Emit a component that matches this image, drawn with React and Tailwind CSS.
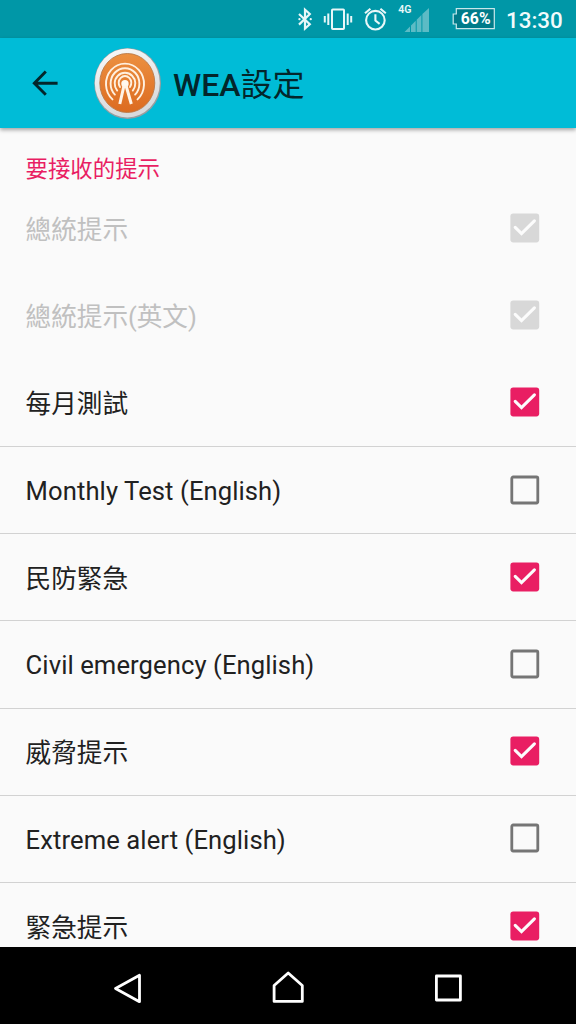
import React from 'react';

const rows = [
  { label: '總統提示', checked: true, disabled: true },
  { label: '總統提示(英文)', checked: true, disabled: true },
  { label: '每月測試', checked: true, divider: true },
  { label: 'Monthly Test (English)', checked: false, divider: true, latin: true },
  { label: '民防緊急', checked: true, divider: true },
  { label: 'Civil emergency (English)', checked: false, divider: true, latin: true },
  { label: '威脅提示', checked: true, divider: true },
  { label: 'Extreme alert (English)', checked: false, divider: true, latin: true },
  { label: '緊急提示', checked: true },
];

function Checkbox({ checked, disabled }) {
  return (
    <svg className="mb-[0.8px] h-[30px] w-[30px] shrink-0" viewBox="0 0 30 30" fill="none">
      {checked ? (
        <>
          <rect x="0.4" y="0.6" width="28.8" height="28.8" rx="2.8" fill={disabled ? '#d8d8d8' : '#e91e63'} />
          <path d="M5.2 14.4 11.5 20.6 24.4 7.9" stroke="#fcfcfc" strokeWidth="3.1" strokeLinecap="round" />
        </>
      ) : (
        <rect x="1.8" y="2" width="26" height="26" rx="1.4" stroke="#757575" strokeWidth="2.8" />
      )}
    </svg>
  );
}

function StatusBar() {
  return (
    <header className="flex h-[38px] shrink-0 items-center bg-[#0097a7] text-white">
      <svg className="ml-[297px] h-[38px] w-[16px] shrink-0" viewBox="0 0 16 38" fill="none" stroke="#e8f7f8" strokeWidth="2.2">
        <path d="M2 14 12.8 24.3 8 28.6V9.7l4.8 4.3L2 24.6" />
        <path d="M2.4 19.2h.1M13.7 19.2h.1" strokeLinecap="round" strokeWidth="2.2" />
      </svg>
      <svg className="ml-[10px] h-[38px] w-[30px] shrink-0" viewBox="0 0 30 38" fill="none" stroke="#e8f7f8" strokeWidth="2">
        <rect x="9" y="9.5" width="12" height="19.5" rx="0.8" />
        <path d="M5.3 13.5v11.5M1.8 16v6.5M24.7 13.5v11.5M28.2 16v6.5" />
      </svg>
      <svg className="ml-[10px] h-[38px] w-[26px] shrink-0" viewBox="0 0 26 38" fill="none" stroke="#e8f7f8" strokeWidth="2.1">
        <circle cx="12.4" cy="20.2" r="9.3" />
        <path d="M12.4 14.3v6.3l4.2 3.2M2 13.2 7.4 8.7M17.4 8.7l5.4 4.5" />
      </svg>
      <svg className="ml-[8px] h-[38px] w-[34px] shrink-0" viewBox="0 0 34 38">
        <text x="1.3" y="12.8" fill="#eaf8f9" fontFamily="Roboto, sans-serif" fontWeight="600" fontSize="10.6">4G</text>
        <path d="M7.5 32 13 26.5V32zM14 25.5l4.7-4.7V32H14zM19.7 19.8l4.7-4.7V32h-4.7zM25.4 14.1 32 8v24h-6.6z" fill="#5cbbc5" />
      </svg>
      <svg className="ml-[21px] h-[38px] w-[45px] shrink-0" viewBox="0 0 45 38">
        <path d="M4.3 8.6h38v20h-38v-4.6H1.2v-10h3.1z" fill="#007b89" stroke="#c8e8eb" strokeWidth="1.2" />
        <text x="8.8" y="24.4" fill="#fff" fontFamily="Roboto, sans-serif" fontWeight="700" fontSize="16.8" textLength="29.8" lengthAdjust="spacingAndGlyphs">66%</text>
      </svg>
      <span className="ml-[9px] pt-[3px] font-[Roboto,sans-serif] text-[22.4px] font-medium leading-none text-[#f2fbfc]">13:30</span>
    </header>
  );
}

function BroadcastIcon() {
  return (
    <svg className="h-[74px] w-[70px] shrink-0" viewBox="0 0 70 74" fill="none">
      <defs>
        <linearGradient id="rim" x1="0" y1="0" x2="0.3" y2="1">
          <stop stopColor="#fafafa" />
          <stop offset="1" stopColor="#d8dadc" />
        </linearGradient>
        <linearGradient id="face" x1="0" y1="0" x2="0" y2="1">
          <stop stopColor="#ec9040" />
          <stop offset="1" stopColor="#dc6b20" />
        </linearGradient>
      </defs>
      <ellipse cx="34.6" cy="37.4" rx="33.4" ry="35.5" fill="#9a9d9f" />
      <ellipse cx="34.3" cy="36.9" rx="32.5" ry="34.5" fill="url(#rim)" />
      <ellipse cx="34.3" cy="37" rx="27.5" ry="29.5" fill="url(#face)" stroke="#b97948" strokeWidth="0.9" />
      <g transform="translate(-1.5 0)">
        <g stroke="#fff0df" strokeWidth="1.9" strokeLinecap="round">
          <path d="M21 53.4A19 20.4 0 1 1 46 53.4" />
          <path d="M23.4 48.6A14.4 15.4 0 1 1 43.6 48.6" />
          <path d="M25.7 44.6A10.3 10.8 0 1 1 41.3 44.6" />
          <path d="M28.5 41A6.3 6.8 0 1 1 38.5 41" />
        </g>
        <circle cx="33.5" cy="37.8" r="3.7" fill="#fff8ef" />
        <path d="M32.5 39.5 28.3 58M34.5 39.5 39.8 58" stroke="#fff3e6" strokeWidth="3" />
      </g>
    </svg>
  );
}

function AppBar() {
  return (
    <div className="z-10 flex h-[90px] shrink-0 items-center bg-[#00bcd7] shadow-[0_2px_4px_rgba(0,0,0,0.35)]">
      <svg className="ml-[30px] h-[30px] w-[30px] shrink-0" viewBox="0 0 30 30" fill="none" stroke="#03262b" strokeWidth="2.9">
        <path d="M27.6 15.3H4.5M15.8 3.6 4.3 15.3l11.5 11.5" />
      </svg>
      <div className="ml-[33px] flex">
        <BroadcastIcon />
      </div>
      <h1 className="ml-[10px] pt-[4px] font-[Roboto,'Noto_Sans_CJK_TC',sans-serif] text-[32px] font-medium leading-[40px] text-[#03262b]">
        WEA<span className="font-normal">設定</span>
      </h1>
    </div>
  );
}

function NavBar() {
  return (
    <nav className="flex h-[77px] shrink-0 items-center bg-black">
      <svg className="ml-[112px] h-[36px] w-[32px]" viewBox="0 0 32 36" fill="none" stroke="#fff" strokeWidth="2.8" strokeLinejoin="round">
        <path d="M3.5 20.5 27.5 7.3v26.4z" />
      </svg>
      <svg className="ml-[127px] h-[36px] w-[34px]" viewBox="0 0 34 36" fill="none" stroke="#fff" strokeWidth="2.8" strokeLinejoin="round">
        <path d="M3.1 33.4V17.5L17.2 5l14.1 12.5v15.9z" />
      </svg>
      <svg className="ml-[128px] h-[36px] w-[32px]" viewBox="0 0 32 36" fill="none" stroke="#fff" strokeWidth="2.8" strokeLinejoin="round">
        <rect x="3.4" y="8" width="24" height="24" />
      </svg>
    </nav>
  );
}

export default function App() {
  return (
    <div className="flex h-[1024px] w-[576px] flex-col overflow-hidden bg-[#fafafa]">
      <StatusBar />
      <AppBar />
      <main className="min-h-0 flex-1 overflow-hidden font-[Roboto,'Noto_Sans_CJK_TC',sans-serif]">
        <h2 className="h-[57.4px] pl-[25.6px] pt-[25px] text-[22.4px] leading-[32px] text-[#e91e63]">要接收的提示</h2>
        <ul>
          {rows.map((row) => (
            <li
              key={row.label}
              className={`flex h-[87.2px] items-center justify-between border-b pl-[25.6px] pr-[36px] ${
                row.divider ? 'border-[#d2d2d2]' : 'border-transparent'
              }`}
            >
              <span
                className={`text-[25.6px] leading-[38px] ${row.disabled ? 'text-[#c0c0c0]' : 'text-[#212121]'} ${
                  row.latin ? 'pt-[2px] tracking-[0.09px]' : 'pt-[3.2px]'
                }`}
              >
                {row.label}
              </span>
              <Checkbox checked={row.checked} disabled={row.disabled} />
            </li>
          ))}
        </ul>
      </main>
      <NavBar />
    </div>
  );
}
